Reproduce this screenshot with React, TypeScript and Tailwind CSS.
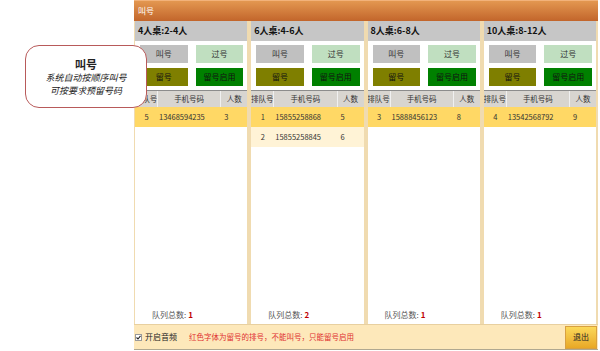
import React from 'react'

type Row = { no: number; phone: string; count: number }

interface Table {
  title: string
  rows: Row[]
}

const tables: Table[] = [
  { title: '4人桌:2-4人', rows: [{ no: 5, phone: '13468594235', count: 3 }] },
  {
    title: '6人桌:4-6人',
    rows: [
      { no: 1, phone: '15855258868', count: 5 },
      { no: 2, phone: '15855258845', count: 6 },
    ],
  },
  { title: '8人桌:6-8人', rows: [{ no: 3, phone: '15888456123', count: 8 }] },
  { title: '10人桌:8-12人', rows: [{ no: 4, phone: '13542568792', count: 9 }] },
]

const font = { fontFamily: '"Noto Sans CJK SC", "Liberation Sans", sans-serif' }

function TableColumn({ table }: { table: Table }) {
  return (
    <div className="flex flex-1 flex-col bg-white">
      {/* Title */}
      <div className="flex h-[20px] items-center bg-[#c6c6c6] pl-[3px] text-[9px] font-bold text-[#111]">
        {table.title}
      </div>

      {/* Buttons */}
      <div className="grid grid-cols-2 gap-x-[8px] gap-y-[5px] pl-[5px] pr-[4px] pt-[4px] pb-[4px] text-[8px]">
        <div className="flex h-[18px] items-center justify-center bg-[#c0c0c0] text-[#333]">叫号</div>
        <div className="flex h-[18px] items-center justify-center bg-[#c0dfc0] text-[#333]">过号</div>
        <div className="flex h-[18px] items-center justify-center bg-[#7f7f00] text-[#111]">留号</div>
        <div className="flex h-[18px] items-center justify-center bg-[#008000] text-[#111]">留号启用</div>
      </div>

      {/* Queue table */}
      <div className="flex h-[17px] whitespace-nowrap border-t border-[#8c8c8c] bg-[#d8d5d0] text-[7.5px] text-[#333]">
        <div className="flex w-[23px] items-center justify-center overflow-hidden border-r border-[#f0f0f0]">排队号</div>
        <div className="flex flex-1 items-center justify-center border-r border-[#f0f0f0]">手机号码</div>
        <div className="flex w-[26px] items-center justify-center">人数</div>
      </div>
      {table.rows.map((r, i) => (
        <div
          key={r.no}
          className={`flex h-[20px] text-[7.5px] text-[#333] ${i === 0 ? 'bg-[#ffd865]' : 'bg-[#fff3d6]'}`}
        >
          <div className="flex w-[23px] items-center justify-center">{r.no}</div>
          <div className="flex flex-1 items-center pl-[1px]">{r.phone}</div>
          <div className="flex w-[26px] items-center pl-[3px]">{r.count}</div>
        </div>
      ))}

      <div className="flex-1" />
      <div className="flex h-[18px] items-center pl-[17px] text-[8px] text-[#555]">
        队列总数:<span className="ml-[2px] font-bold text-[#c00000]">{table.rows.length}</span>
      </div>
    </div>
  )
}

export default function App() {
  return (
    <div className="relative h-[351px] w-[600px] overflow-hidden bg-white" style={font}>
      <div className="ml-[134px] flex h-[350px] w-[464px] flex-col border-b border-[#b0a890] bg-[#f0dbb0]">
        {/* Title bar */}
        <div className="flex h-[21px] items-center border-t border-[#f2b27a] bg-gradient-to-b from-[#e39750] to-[#c2652b] pl-[4px] text-[8px] text-white">
          叫号
        </div>

        {/* Columns */}
        <div className="flex flex-1 gap-[4px] pl-[1px] pr-[2px]">
          {tables.map((t) => (
            <TableColumn key={t.title} table={t} />
          ))}
        </div>

        {/* Bottom bar */}
        <div className="flex h-[25px] items-center border-t border-[#e8d0a0] bg-[#fde8ba]">
          <svg width="7" height="7" viewBox="0 0 7 7" className="ml-[1px]">
            <rect x="0.5" y="0.5" width="6" height="6" fill="#fff" stroke="#999" />
            <path d="M1.5 3.5 L3 5 L5.5 1.8" fill="none" stroke="#222" strokeWidth="1.1" />
          </svg>
          <span className="ml-[3px] text-[8px] text-[#222]">开启音频</span>
          <span className="ml-[12px] text-[7.5px] text-[#e03030]">红色字体为留号的排号，不能叫号，只能留号启用</span>
          <div className="flex-1" />
          <div className="mr-[1px] flex h-[23px] w-[32px] items-center justify-center border border-[#d8a040] bg-gradient-to-b from-[#fbd858] to-[#e8a825] text-[8px] text-[#222]">
            退出
          </div>
        </div>
      </div>

      {/* Callout */}
      <div className="absolute left-[25px] top-[45px] flex h-[63px] w-[122px] flex-col items-center justify-center rounded-[14px] border-[1.5px] border-[#b85a5a] bg-white text-[#222]">
        <div className="text-[11px] font-bold leading-[14px]">叫号</div>
        <div className="text-[9px] italic leading-[13px]">系统自动按顺序叫号</div>
        <div className="text-[9px] italic leading-[13px]">可按要求预留号码</div>
      </div>
    </div>
  )
}
